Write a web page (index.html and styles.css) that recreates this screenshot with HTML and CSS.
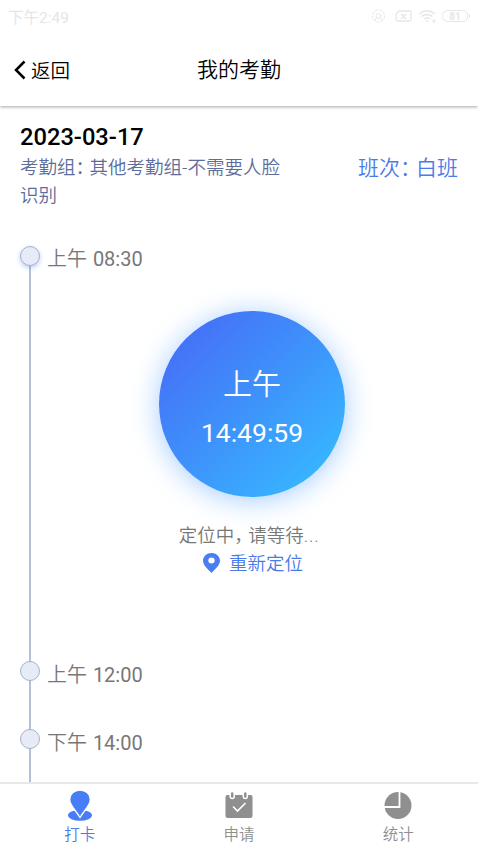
FILE: index.html
```html
<!DOCTYPE html>
<html lang="zh-CN">
<head>
<meta charset="utf-8">
<title>我的考勤</title>
<link rel="stylesheet" href="styles.css">
</head>
<body>
<header class="header">
  <div class="status">
    <span>下午2:49</span>
    <svg class="status-icons" width="102" height="16" viewBox="0 0 102 16" fill="none" stroke="currentColor">
      <circle cx="8.500" cy="8" r="6" stroke-dasharray="3 1"/><circle cx="8.500" cy="8" r="2.500"/><path d="M5 12l2-3M12 12l-2-3"/>
      <path d="M29 3h10.500q1.500 0 1.500 1.500v7q0 1.500-1.500 1.500h-12q-1.500 0-1.500-1.500V6zM31 6l5 5M36 6l-5 5" stroke-width="1.300"/>
      <path d="M49 6q8-6.500 16 0M51.500 8.500q5.500-4 11 0M54 11q3-2 6 0" stroke-width="1.500"/><circle cx="57" cy="13" r="1" fill="currentColor" stroke="none"/><path d="M64 11v4M62 13h4"/>
      <rect x="72.500" y="2.500" width="25" height="11" rx="5"/><path d="M99.500 6v4"/>
      <text x="85" y="12" text-anchor="middle" class="battery">81</text>
    </svg>
  </div>
  <div class="nav">
    <a class="back"><svg width="12" height="20" viewBox="0 0 12 20" fill="none" stroke="#000" stroke-width="2.500"><path d="M10.500 1.500L2 10l8.500 8.500"/></svg><span>返回</span></a>
    <h1 class="title">我的考勤</h1>
  </div>
</header>
<main class="main">
  <h2 class="date">2023-03-17</h2>
  <div class="info">
    <p class="group">考勤组<span class="colon">：</span>其他考勤组-不需要人脸识别</p>
    <p class="shift">班次<span class="colon">：</span>白班</p>
  </div>
  <ol class="timeline">
    <li class="slot first"><i class="dot glow"></i>
      <div class="slot-body">
        <div class="time">上午 <span class="digits">08:30</span></div>
        <button class="punch"><span class="period">上午</span><span class="clock">14:49:59</span></button>
        <p class="locating">定位中<span class="comma">，</span>请等待<span class="dots">...</span></p>
        <a class="relocate"><svg width="17" height="20" viewBox="0 0 16 20" preserveAspectRatio="none"><path fill="#4a7df0" fill-rule="evenodd" d="M8 0C3.500 0 0 3.500 0 7.800 0 12.500 5.500 17 8 20c2.500-3 8-7.500 8-12.200C16 3.500 12.500 0 8 0zm0 4.600a3 3 0 1 1 0 6 3 3 0 0 1 0-6z"/></svg><span>重新定位</span></a>
      </div>
    </li>
    <li class="slot second"><i class="dot"></i><div class="time">上午 <span class="digits">12:00</span></div></li>
    <li class="slot third"><i class="dot"></i><div class="time">下午 <span class="digits">14:00</span></div></li>
  </ol>
</main>
<footer class="tabs">
  <a class="tab active">
    <svg width="28" height="32" viewBox="0 0 28 32"><ellipse cx="14" cy="25.300" rx="12" ry="5.500" fill="#477ef7"/><path d="M14 0C8 0 3.700 4.300 3.700 9.500c0 6 6.300 11 10.300 18 4-7 10.300-12 10.300-18C24.300 4.300 20 0 14 0z" fill="#477ef7" stroke="#fff" stroke-width="1.300"/></svg>
    <span>打卡</span>
  </a>
  <a class="tab">
    <svg width="28" height="32" viewBox="0 0 28 32"><rect x=".5" y="5" width="27" height="23" rx="2" fill="#8f8f8f"/><g fill="#8f8f8f" stroke="#fff" stroke-width="1.500"><rect x="5.200" y="1.500" width="4" height="7" rx="2"/><rect x="18.300" y="1.500" width="4" height="7" rx="2"/></g><path d="M8 16.500l4.500 4.500 8-8" fill="none" stroke="#fff" stroke-width="1.600"/></svg>
    <span>申请</span>
  </a>
  <a class="tab">
    <svg width="28" height="32" viewBox="0 0 28 32"><circle cx="14" cy="15.500" r="13.500" fill="#8f8f8f"/><path d="M15.500 1v16H0" fill="none" stroke="#fff" stroke-width="1.800"/></svg>
    <span>统计</span>
  </a>
</footer>
</body>
</html>
```
FILE: styles.css
```css
* { box-sizing: border-box; margin: 0; padding: 0; }
body {
  display: flex;
  flex-direction: column;
  width: 478px;
  height: 850px;
  overflow: hidden;
  background: #fff;
  color: #777;
  font-family: Roboto, "Noto Sans CJK SC", sans-serif;
  font-weight: 350;
}
.header {
  flex: none;
  height: 106px;
  box-shadow: 0 1px 3px rgba(0, 0, 0, .35);
}
.status {
  display: flex;
  justify-content: space-between;
  align-items: center;
  height: 32px;
  padding: 0 6px 0 8px;
  color: #e6e6e6;
  font-size: 15.5px;
  font-weight: 400;
}
.status-icons { color: #e6e6e6; }
.battery { font-size: 10px; fill: currentColor; stroke: none; font-weight: 700; }
.nav {
  display: grid;
  grid-template-columns: 1fr auto 1fr;
  align-items: center;
  height: 76px;
  color: #000;
}
.back {
  display: flex;
  align-items: center;
  gap: 5px;
  padding-left: 14px;
  padding-bottom: 1px;
  font-size: 19.500px;
}
.title { font-size: 21px; font-weight: 350; line-height: 30px; }
.main {
  flex: 1;
  display: flex;
  flex-direction: column;
  min-height: 0;
  padding: 16px 20px 0;
}
.date {
  color: #000;
  font-size: 23.700px;
  font-weight: 500;
  line-height: 30px;
}
.info {
  display: flex;
  justify-content: space-between;
  height: 91px;
  padding-top: 1px;
  color: #5d6d9b;
}
.group { width: 264px; font-size: 18.500px; line-height: 28px; padding-top: 1px; }
.shift { color: #4a7be8; font-size: 21px; line-height: 30px; }
.colon { letter-spacing: -.24em; }
.comma { letter-spacing: -.24em; }
.dots { letter-spacing: .04em; }
.timeline {
  flex: 1;
  min-height: 0;
  list-style: none;
}
.slot {
  display: flex;
  gap: 7px;
  background: linear-gradient(#b4c0d6, #b4c0d6) 9px 0 / 2px 100% no-repeat;
}
.first { height: 415px; background-position: 9px 12px; }
.second { height: 68px; }
.third { height: 57px; }
.dot {
  flex: none;
  width: 20px;
  height: 20px;
  margin-top: 3px;
  border: 1.500px solid #a6b1ca;
  border-radius: 50%;
  background: #e6ebf7;
}
.glow { box-shadow: 0 2px 5px rgba(80, 130, 240, .4); }
.slot-body {
  flex: 1;
  display: flex;
  flex-direction: column;
  align-items: center;
}
.time {
  align-self: flex-start;
  height: 32px;
  padding-top: 1px;
  font-size: 20px;
  line-height: 30px;
}
.second .time, .third .time { padding-top: 2px; }
.digits { margin-left: 1px; font-weight: 400; }
.punch {
  display: flex;
  flex-direction: column;
  align-items: center;
  flex: none;
  width: 186px;
  height: 186px;
  margin-top: 36px;
  margin-right: 1px;
  padding-top: 52px;
  border: 0;
  border-radius: 50%;
  background: linear-gradient(135deg, #456ff7 10%, #37b7ff 90%);
  box-shadow: 0 3px 28px rgba(55, 145, 255, .45);
  color: #fff;
  font-family: inherit;
  font-weight: 350;
}
.period { font-size: 29px; line-height: 44px; }
.clock { font-size: 26.500px; line-height: 52px; font-weight: 400; }
.locating { margin-top: 25px; margin-right: 7px; font-size: 18.500px; line-height: 28px; }
.relocate {
  display: flex;
  align-items: center;
  gap: 9px;
  height: 25px;
  margin-left: 1px;
  color: #4a7be8;
  font-size: 18.500px;
}
.relocate span { line-height: 26px; padding-top: 2px; }
.tabs {
  flex: none;
  display: grid;
  grid-template-columns: repeat(3, 1fr);
  height: 68px;
  border-top: 2px solid #e8e8e8;
  background: #fff;
}
.tab {
  display: flex;
  flex-direction: column;
  align-items: center;
  padding-top: 6px;
  color: #8f8f8f;
  font-size: 15.500px;
  line-height: 26px;
}
.active { color: #4a7be8; }
```
